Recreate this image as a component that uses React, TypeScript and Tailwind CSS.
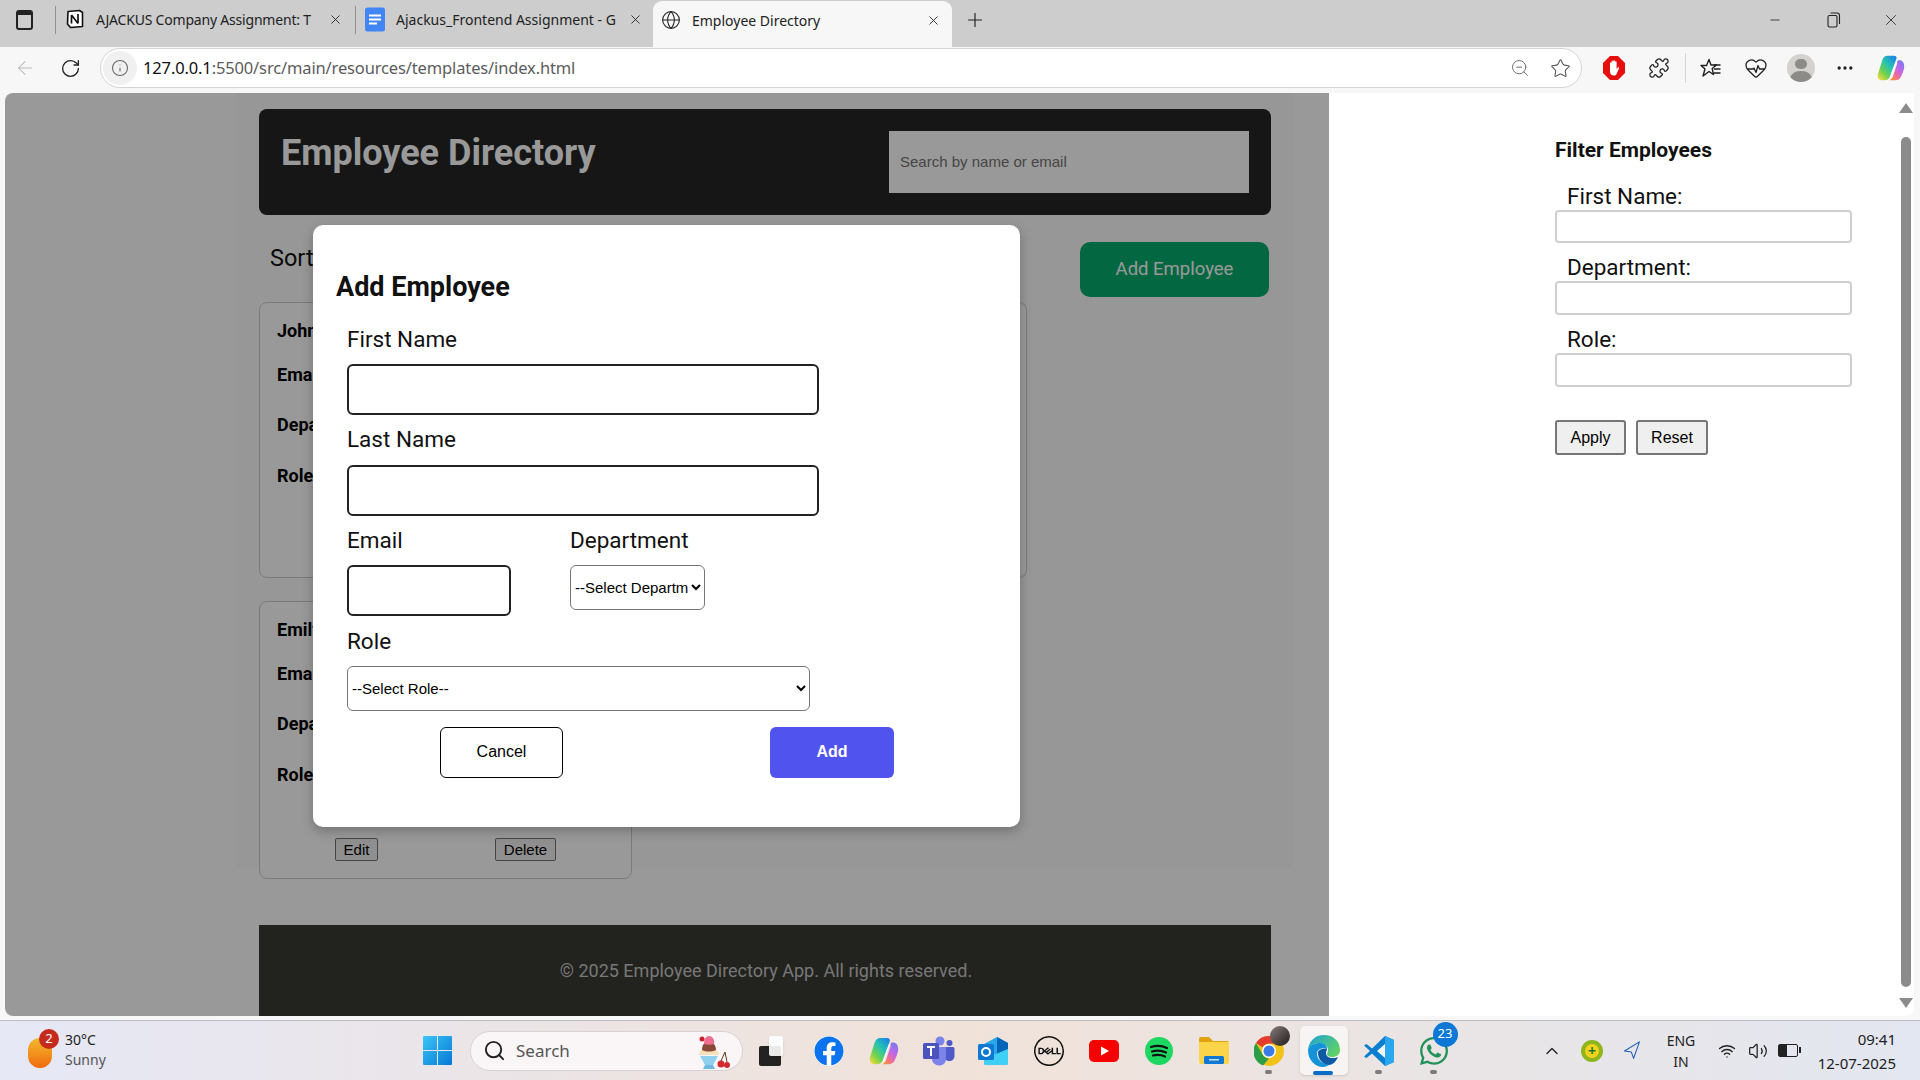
import React from "react";
import {
  ArrowLeft,
  Ellipsis,
  Globe,
  HeartPulse,
  Info,
  Minus,
  Navigation,
  Plus,
  Puzzle,
  RotateCw,
  Search,
  Star,
  Volume2,
  Wifi,
  X,
  ZoomOut,
  ChevronUp,
} from "lucide-react";
import { FaFacebook, FaWhatsapp } from "react-icons/fa";
import { SiDell } from "react-icons/si";

const ui = "font-['Noto_Sans',sans-serif]";
const roboto = "font-['Roboto',sans-serif]";
const arial = "font-['Liberation_Sans',Arial,sans-serif]";

function CopilotIcon({ size, id }: { size: number; id: string }) {
  return (
    <svg width={size} height={size} viewBox="0 0 32 32">
      <defs>
        <linearGradient id={`${id}a`} x1="0.9" y1="0" x2="0.1" y2="1">
          <stop offset="0" stopColor="#1b7fe8" />
          <stop offset="0.4" stopColor="#27c4b0" />
          <stop offset="0.7" stopColor="#6fd24f" />
          <stop offset="1" stopColor="#f6d93a" />
        </linearGradient>
        <linearGradient id={`${id}b`} x1="0.9" y1="0" x2="0.2" y2="1">
          <stop offset="0" stopColor="#6d7cf2" />
          <stop offset="0.45" stopColor="#c765e6" />
          <stop offset="0.75" stopColor="#f2708c" />
          <stop offset="1" stopColor="#f6903a" />
        </linearGradient>
      </defs>
      <path d="M12 2h7c3 0 4 2 3 4L15 25c-1 3-3 5-6 5H6c-4 0-6-3-5-7L6 7c1-3 3-5 6-5z" fill={`url(#${id}a)`} />
      <path d="M24 7h2c3 0 5 3 5 6v3c-1 4-3 10-5 12-1 1-3 2-5 2h-7c2-1 3-2 4-4l5-15c0-2 0-3 1-4z" fill={`url(#${id}b)`} />
      <path d="M21 9l1 0-6 18c-1 1-1 2-2 3h-1c1-1 2-2 2-4z" fill="#fff" opacity="0.9" />
    </svg>
  );
}

function NotionIcon() {
  return (
    <svg width="20" height="20" viewBox="0 0 20 20">
      <path d="M3 2.5 14.500 1.500 17.500 3.500V17.500L5.500 18.500 2.500 15z" fill="#fff" stroke="#111" strokeWidth="1.6" strokeLinejoin="round" />
      <path d="M6.500 6v8.500M6.500 6l6.500 8.500M13 5v9.500" fill="none" stroke="#111" strokeWidth="1.7" />
    </svg>
  );
}

function DocsIcon() {
  return (
    <svg width="21" height="25" viewBox="0 0 20 24">
      <rect x="0" y="0" width="20" height="24" rx="2.500" fill="#4285f4" />
      <path d="M4 8h12M4 12h12M4 16h8" stroke="#fff" strokeWidth="2" />
    </svg>
  );
}

function RestoreIcon() {
  return (
    <svg width="14" height="16" viewBox="0 0 14 16" fill="none" stroke="#222" strokeWidth="1.1">
      <rect x="1" y="3.500" width="9" height="11.500" rx="1.500" />
      <path d="M3.500 1h6.500c1.500 0 2.500 1 2.500 2.500V12" />
    </svg>
  );
}

function StopIcon() {
  return (
    <svg width="22" height="24" viewBox="0 0 22 24">
      <path d="M7 0h8l7 7v10l-7 7H7l-7-7V7z" fill="#e60f0f" />
      <path d="M7 11V7c0-1 1.600-1 1.600 0V5.500c0-1 1.700-1 1.700 0V5c0-1 1.700-1 1.700 0v1c0-1 1.600-1 1.600 0v7l1.200-1.500c.8-.8 1.700 0 1.200 1L13.500 18c-.5 1-1.200 1.500-2.500 1.500-2.500 0-4-1.500-4-4z" fill="#fff" />
    </svg>
  );
}

function FavoritesIcon() {
  return (
    <svg width="22" height="22" viewBox="0 0 22 22" fill="none" stroke="#222" strokeWidth="1.4" strokeLinejoin="round">
      <path d="M9 2.500 11 8h5.500l-4.300 3.500 1.300 6L9 14.500 3 19l2-7-4-3.500h5.500z" />
      <path d="M13.500 8h7M14 12h6.500M14 16h6.500" />
    </svg>
  );
}

function ProfileIcon() {
  return (
    <div className="flex h-[28px] w-[28px] flex-col items-center overflow-hidden rounded-full bg-[#d3d2cf]">
      <div className="mt-[5px] h-[12px] w-[12px] rounded-full bg-[#8c8b88]" />
      <div className="mt-[2px] h-[14px] w-[24px] rounded-t-full bg-[#8c8b88]" />
    </div>
  );
}

function WindowsIcon() {
  return (
    <svg width="29" height="29" viewBox="0 0 29 29">
      <defs>
        <linearGradient id="win" x1="0" y1="0" x2="1" y2="1">
          <stop offset="0" stopColor="#3cc5f6" />
          <stop offset="1" stopColor="#0578d6" />
        </linearGradient>
      </defs>
      <path d="M0 1a1 1 0 0 1 1-1h13v14H0zM15 0h13a1 1 0 0 1 1 1v13H15zM0 15h14v14H1a1 1 0 0 1-1-1zM15 15h14v13a1 1 0 0 1-1 1H15z" fill="url(#win)" />
    </svg>
  );
}

function SundaeIcon() {
  return (
    <svg width="36" height="38" viewBox="0 0 36 38">
      <path d="M6 23h18l-5 9h-8z" fill="#8ed0ee" />
      <path d="M11 32h8l2 4H9z" fill="#6fb9e0" />
      <path d="M5 22c0-4 4-6 6-6h8c3 0 6 3 6 6z" fill="#f6e0b8" />
      <path d="M8 17c0-6 3-8 7-8s7 3 7 8c-4 2-10 2-14 0z" fill="#8a4a3a" />
      <path d="M10 11c0-5 2-8 5-8s6 3 5 8c-3 1-7 1-10 0z" fill="#ee6d90" />
      <circle cx="8" cy="6" r="2.500" fill="#c8202c" />
      <circle cx="27" cy="31" r="3.500" fill="#d22a2f" />
      <circle cx="33" cy="32" r="3" fill="#d22a2f" />
      <path d="M27 28l4-9 2 10" fill="none" stroke="#5b3a1e" strokeWidth="1" />
    </svg>
  );
}

function TaskViewIcon() {
  return (
    <div className="relative h-[30px] w-[24px]">
      <div className="absolute bottom-0 left-0 h-[20px] w-[22px] rounded-[2px] bg-[#222]" />
      <div className="absolute right-0 top-0 h-[20px] w-[14px] rounded-[2px] bg-white/90 shadow-sm" />
    </div>
  );
}

function TeamsIcon() {
  return (
    <svg width="32" height="30" viewBox="0 0 32 30">
      <circle cx="17" cy="5" r="4.500" fill="#7b83eb" />
      <circle cx="26.500" cy="7" r="3" fill="#5059c9" />
      <path d="M21 11h9a1.500 1.500 0 0 1 1.500 1.500V20c0 3-2.500 5-5 5-3 0-5.500-2-5.500-5z" fill="#5059c9" />
      <path d="M9 11h14v12c0 4-3 6.500-7 6.500s-7-3-7-6.500z" fill="#7b83eb" />
      <rect x="0" y="7" width="16" height="16" rx="1.500" fill="#4b53bc" />
      <path d="M4 11h8M8 11v9" stroke="#fff" strokeWidth="2" />
    </svg>
  );
}

function OutlookIcon() {
  return (
    <svg width="31" height="28" viewBox="0 0 31 28">
      <path d="M6 7 19 0l11 6v20a2 2 0 0 1-2 2H8a2 2 0 0 1-2-2z" fill="#28a8ea" />
      <path d="M30 6v6L19 17V0z" fill="#0364b8" />
      <path d="M6 17l12 0 12-5v14a2 2 0 0 1-2 2H8a2 2 0 0 1-2-2z" fill="#40d0f5" />
      <rect x="0" y="7" width="16" height="16" rx="1.500" fill="#0f78d4" />
      <circle cx="8" cy="15" r="4" fill="none" stroke="#fff" strokeWidth="2" />
    </svg>
  );
}

function YoutubeIcon() {
  return (
    <svg width="30" height="22" viewBox="0 0 30 22">
      <rect width="30" height="22" rx="5" fill="#f70000" />
      <path d="M12 6.500 20 11l-8 4.500z" fill="#fff" />
    </svg>
  );
}

function SpotifyIcon() {
  return (
    <svg width="28" height="28" viewBox="0 0 28 28">
      <circle cx="14" cy="14" r="14" fill="#1ed760" />
      <path d="M6 10c6-2 11-1.500 16 1M7 14.500c5-1.500 10-1 14 1M8 18.500c4-1 8-.8 12 1" fill="none" stroke="#111" strokeWidth="2.200" strokeLinecap="round" />
    </svg>
  );
}

function FolderIcon() {
  return (
    <svg width="30" height="27" viewBox="0 0 30 27">
      <path d="M0 2a2 2 0 0 1 2-2h8l4 4h14a2 2 0 0 1 2 2v3H0z" fill="#e0a20f" />
      <path d="M0 5h30v20a2 2 0 0 1-2 2H2a2 2 0 0 1-2-2z" fill="#fbd449" />
      <rect x="5" y="19" width="20" height="8" rx="1.500" fill="#0f78d4" />
      <rect x="10" y="22" width="10" height="1.500" fill="#bfe0f5" />
    </svg>
  );
}

function ChromeIcon() {
  return (
    <svg width="30" height="30" viewBox="0 0 30 30">
      <circle cx="15" cy="15" r="15" fill="#f2c21a" />
      <path d="M15 0a15 15 0 0 1 13 7.500H15a7.500 7.500 0 0 0-6.500 3.700L2 7A15 15 0 0 1 15 0z" fill="#e33b2e" />
      <path d="M2 7l6.500 11.300A7.500 7.500 0 0 0 15 22.500L9 29.500A15 15 0 0 1 2 7z" fill="#2b9f48" />
      <circle cx="15" cy="15" r="7" fill="#fff" />
      <circle cx="15" cy="15" r="5.500" fill="#3a7bea" />
    </svg>
  );
}

function EdgeIcon() {
  return (
    <svg width="32" height="32" viewBox="0 0 32 32">
      <defs>
        <linearGradient id="edgeA" x1="0" y1="0" x2="1" y2="0.6">
          <stop offset="0" stopColor="#1aa3d8" />
          <stop offset="1" stopColor="#5fd068" />
        </linearGradient>
      </defs>
      <path d="M16 0c9 0 16 6 16 15 0 5-4 7-8 7-3 0-5-1-5-3 0-1 1-2 1-4 0-4-4-7-8-7C6 8 2 11 0 15 1 6 7 0 16 0z" fill="url(#edgeA)" />
      <path d="M0 15c2-5 7-7 12-7 4 0 7 2 7 6-5-2-10 0-10 5 0 5 5 10 12 11-2 1-4 2-6 2C7 32 0 25 0 15z" fill="#1593d8" />
      <path d="M10 18c0-3 4-5 9-4 0 1-1 2-1 4 0 3 3 5 6 5 2 0 4 0 6-1-2 5-6 8-9 8-6 0-11-6-11-12z" fill="#0c59a4" />
    </svg>
  );
}

function VsCodeIcon() {
  return (
    <svg width="30" height="30" viewBox="0 0 30 30">
      <path d="M21 0l9 4v22l-9 4L8 17.500l-5.500 4.500L0 20.500 6 15 0 9.500 2.500 8 8 12.500z" fill="#0a7fd0" />
      <path d="M21 0l9 4v22l-9 4z" fill="#2aa7ee" />
      <path d="M21 8v14l-8-7z" fill="#fff" opacity="0.95" />
    </svg>
  );
}

function TaskbarSlot({
  children,
  active,
  dot,
}: {
  children: React.ReactNode;
  active?: boolean;
  dot?: boolean;
}) {
  return (
    <div className="relative flex h-full w-[55px] items-center justify-center">
      {active && (
        <div className="absolute left-[4px] top-[5px] h-[49px] w-[48px] rounded-[5px] bg-white/60 shadow-sm" />
      )}
      <div className="relative flex items-center justify-center">{children}</div>
      {dot && (
        <div className="absolute bottom-[6px] left-[24px] h-[4px] w-[7px] rounded-full bg-[#7b7b7b]" />
      )}
      {active && (
        <div className="absolute bottom-[5px] left-[17px] h-[4px] w-[20px] rounded-full bg-[#0a6cc9]" />
      )}
    </div>
  );
}

function Tab({
  icon,
  title,
  active,
  titleClass,
}: {
  icon: React.ReactNode;
  title: string;
  active?: boolean;
  titleClass?: string;
}) {
  return (
    <div
      className={`flex h-full items-center pb-[9px] ${
        active ? "mt-[1px] w-[299px] rounded-t-[9px] bg-[#f7f7f7] pl-[8px] pr-[11px]" : "w-[298px] pl-[9px] pr-[11px]"
      }`}
    >
      <div className="flex w-[20px] shrink-0 justify-center">{icon}</div>
      <div className={`ml-[11px] flex-1 overflow-hidden whitespace-nowrap text-[14px] text-[#222] ${ui} ${titleClass ?? ""}`}>
        {title}
      </div>
      <X size={15} strokeWidth={1.4} className="ml-[8px] shrink-0 text-[#222]" />
    </div>
  );
}

function BrowserChrome() {
  return (
    <div className="shrink-0">
      <div className="flex h-[47px] items-center bg-[#cdcdcd]">
        <div className="flex w-[55px] justify-center pb-[7px] pr-[6px]">
          <div className="h-[20px] w-[17px] rounded-[3px] border-2 border-[#222] border-t-[5px]" />
        </div>
        <div className="mb-[7px] h-[28px] w-px bg-[#8f8f8f]" />
        <div className="h-[47px] w-[299px]">
          <Tab icon={<NotionIcon />} title="AJACKUS Company Assignment: T" titleClass="tracking-[-0.2px]" />
        </div>
        <div className="mb-[7px] h-[28px] w-px bg-[#8f8f8f]" />
        <div className="h-[47px] w-[297px]">
          <Tab icon={<DocsIcon />} title="Ajackus_Frontend Assignment - G" />
        </div>
        <div className="h-[47px] w-[299px]">
          <Tab active icon={<Globe size={20} strokeWidth={1.3} className="text-[#222]" />} title="Employee Directory" />
        </div>
        <div className="flex w-[46px] justify-center pb-[7px]">
          <Plus size={22} strokeWidth={1.3} className="text-[#222]" />
        </div>
        <div className="flex flex-1 items-center justify-end pb-[7px] pr-[20px]">
          <Minus size={14} strokeWidth={1.4} className="mr-[45px] text-[#222]" />
          <RestoreIcon />
          <X size={18} strokeWidth={1.1} className="ml-[41px] text-[#222]" />
        </div>
      </div>
      <div className="flex h-[46px] items-start bg-[#f7f7f7] pt-[1px]">
        <div className="flex h-[40px] w-[50px] items-center justify-center">
          <ArrowLeft size={22} strokeWidth={1.1} className="text-[#b9b9b9]" />
        </div>
        <div className="flex h-[40px] w-[40px] items-center justify-center">
          <RotateCw size={21} strokeWidth={1.5} className="text-[#222]" />
        </div>
        <div className="ml-[10px] flex h-[40px] w-[1482px] items-center rounded-full border border-[#d4d4d4] bg-white">
          <div className="ml-[2px] flex h-[34px] w-[34px] items-center justify-center rounded-full bg-[#f0f0f0]">
            <Info size={18} strokeWidth={1.4} className="text-[#666]" />
          </div>
          <div className={`ml-[6px] text-[16.500px] tracking-[-0.14px] ${ui}`}>
            <span className="text-[#111]">127.0.0.1</span>
            <span className="text-[#5c5c5c]">:5500/src/main/resources/templates/index.html</span>
          </div>
          <div className="ml-auto flex items-center pr-[10px]">
            <ZoomOut size={20} strokeWidth={1.2} className="text-[#707070]" />
            <Star size={21} strokeWidth={1.2} className="ml-[20px] text-[#555]" />
          </div>
        </div>
        <div className="ml-[21px] flex h-[40px] w-[22px] items-center justify-center">
          <StopIcon />
        </div>
        <div className="ml-[22px] flex h-[40px] w-[24px] items-center justify-center">
          <Puzzle size={22} strokeWidth={1.4} className="text-[#222]" />
        </div>
        <div className="ml-[14px] mt-[5px] h-[30px] w-px bg-[#d5d5d5]" />
        <div className="ml-[14px] flex h-[40px] items-center">
          <FavoritesIcon />
        </div>
        <div className="ml-[22px] flex h-[40px] items-center">
          <HeartPulse size={24} strokeWidth={1.3} className="text-[#222]" />
        </div>
        <div className="ml-[19px] flex h-[40px] items-center">
          <ProfileIcon />
        </div>
        <div className="ml-[20px] flex h-[40px] items-center">
          <Ellipsis size={20} strokeWidth={2} className="text-[#222]" />
        </div>
        <div className="ml-[22px] flex h-[40px] items-center">
          <CopilotIcon size={28} id="cpa" />
        </div>
      </div>
    </div>
  );
}

function EmployeeCard({
  name,
  className,
  children,
}: {
  name: string;
  className: string;
  children?: React.ReactNode;
}) {
  return (
    <div className={`rounded-lg border border-[#ccc] bg-white pl-[17px] text-[18px] font-bold ${roboto} ${className}`}>
      <p className="mt-[15px] h-[26px] leading-[26px]">{name}</p>
      <p className="mt-[18px] h-[26px] leading-[26px]">Email:</p>
      <p className="mt-[24px] h-[26px] leading-[26px]">Department:</p>
      <p className="mt-[25px] h-[26px] leading-[26px]">Role:</p>
      {children}
    </div>
  );
}

function ModalField({ label }: { label: string }) {
  return (
    <label className={`block h-[28px] text-[22.500px] leading-[29px] text-[#111] ${roboto}`}>{label}</label>
  );
}

function AddEmployeeModal() {
  const inputClass = "block h-[51px] rounded-[6px] border-2 border-[#222] bg-white";
  const selectClass = `block rounded-[6px] border border-[#767676] bg-white text-[15px] text-black ${arial}`;
  return (
    <div className="absolute left-[308px] top-[132px] h-[602px] w-[707px] rounded-[10px] bg-white pl-[34px] pt-[44px] shadow-[0_4px_12px_rgba(0,0,0,0.25)]">
      <h2 className={`-ml-[11px] h-[34px] text-[27px] font-bold leading-[36px] text-[#111] ${roboto}`}>Add Employee</h2>
      <div className="mt-[22px]">
        <ModalField label="First Name" />
        <input className={`mt-[11px] w-[472px] ${inputClass}`} />
      </div>
      <div className="mt-[10px]">
        <ModalField label="Last Name" />
        <input className={`mt-[12px] w-[472px] ${inputClass}`} />
      </div>
      <div className="mt-[10px] flex items-start">
        <div className="w-[164px]">
          <ModalField label="Email" />
          <input className={`mt-[11px] w-[164px] ${inputClass}`} />
        </div>
        <div className="ml-[59px]">
          <ModalField label="Department" />
          <select className={`mt-[11px] h-[45px] w-[135px] ${selectClass}`}>
            <option>--Select Department--</option>
          </select>
        </div>
      </div>
      <div className="mt-[11px]">
        <ModalField label="Role" />
        <select className={`mt-[11px] h-[45px] w-[463px] ${selectClass}`}>
          <option>--Select Role--</option>
        </select>
      </div>
      <div className={`ml-[93px] mt-[16px] flex text-[16px] ${arial}`}>
        <button className="h-[51px] w-[123px] rounded-[6px] border border-black bg-white pb-[2px] text-black">Cancel</button>
        <button className="ml-[207px] h-[51px] w-[124px] rounded-[6px] bg-[#5053ee] pb-[2px] font-bold text-white">Add</button>
      </div>
    </div>
  );
}

function MainPanel() {
  return (
    <div className="relative w-[1324px] overflow-hidden rounded-l-lg bg-white">
      <div className="ml-[231px] h-[775px] w-[1057px] bg-[#fcfcfc] px-[23px] pt-[16px]">
        <header className="flex h-[106px] w-[1012px] items-start justify-between rounded-lg bg-[#252525] pl-[22px] pr-[22px] pt-[22px]">
          <h1 className={`text-[36px] font-bold leading-[45px] text-white ${roboto}`}>Employee Directory</h1>
          <input
            placeholder="Search by name or email"
            className={`h-[62px] w-[360px] bg-white pb-[2px] pl-[11px] text-[15px] placeholder:text-[#757575] ${arial}`}
          />
        </header>
        <div className="flex h-[87px] w-[1012px] items-start justify-between">
          <div className={`ml-[11px] mt-[29px] text-[23.500px] leading-[28px] text-[#111] ${roboto}`}>Sort by:</div>
          <button className={`mr-[2px] mt-[27px] h-[55px] w-[189px] rounded-[10px] bg-[#05ad6e] text-[18.500px] text-white ${roboto}`}>
            Add Employee
          </button>
        </div>
        <EmployeeCard name="John Doe" className="h-[276px] w-[768px]" />
        <EmployeeCard name="Emily Smith" className="relative mt-[23px] h-[278px] w-[373px]">
          <div className={`absolute left-[75px] top-[236px] flex text-[16px] font-normal ${arial}`}>
            <button className="h-[23px] w-[43px] rounded-[2px] border border-[#767676] bg-[#efefef] text-[15px] leading-[20px]">Edit</button>
            <button className="ml-[117px] h-[23px] w-[61px] rounded-[2px] border border-[#767676] bg-[#efefef] text-[15px] leading-[20px]">Delete</button>
          </div>
        </EmployeeCard>
      </div>
      <footer className={`ml-[254px] mt-[57px] flex h-[91px] w-[1012px] items-center justify-center bg-[#393935] pl-[2px] text-[18px] text-[#c6c6c6] ${roboto}`}>
        © 2025 Employee Directory App. All rights reserved.
      </footer>
      <div className="absolute inset-0 bg-black/40" />
      <AddEmployeeModal />
    </div>
  );
}

function FilterLabel({ children, className }: { children: React.ReactNode; className?: string }) {
  return (
    <label className={`block h-[28px] pl-[12px] text-[22.500px] leading-[28px] text-[#111] ${roboto} ${className ?? ""}`}>
      {children}
    </label>
  );
}

function FilterPanel() {
  const inputClass = "block w-[297px] rounded-[4px] border-2 border-[#cfcfcf] bg-white";
  const buttonClass = `h-[35px] rounded-[3px] border-2 border-[#767676] bg-[#efefef] text-[16px] text-black ${arial}`;
  return (
    <div className="flex flex-1 rounded-br-lg bg-white">
      <aside className="flex-1 pl-[226px] pt-[43px]">
        <h3 className={`h-[28px] text-[21px] font-bold leading-[28px] text-[#111] ${roboto}`}>Filter Employees</h3>
        <div className="mt-[18px]">
          <FilterLabel>First Name:</FilterLabel>
          <input className={`h-[33px] ${inputClass}`} />
        </div>
        <div className="mt-[10px]">
          <FilterLabel>Department:</FilterLabel>
          <input className={`h-[34px] ${inputClass}`} />
        </div>
        <div className="mt-[9px]">
          <FilterLabel className="pt-[1px]">Role:</FilterLabel>
          <input className={`mt-[1px] h-[34px] ${inputClass}`} />
        </div>
        <div className="mt-[33px] flex">
          <button className={`w-[71px] ${buttonClass}`}>Apply</button>
          <button className={`ml-[10px] w-[72px] ${buttonClass}`}>Reset</button>
        </div>
      </aside>
      <div className="flex w-[17px] flex-col items-center">
        <div className="mt-[10px] h-0 w-0 border-x-[7px] border-b-[10px] border-x-transparent border-b-[#8b8b8b]" />
        <div className="mt-[24px] h-[850px] w-[10px] rounded-full bg-[#8b8b8b]" />
        <div className="mt-[11px] h-0 w-0 border-x-[7px] border-t-[10px] border-x-transparent border-t-[#8b8b8b]" />
      </div>
    </div>
  );
}

function Taskbar() {
  return (
    <div className={`flex h-[60px] shrink-0 items-center border-t border-[#bdbdc4] bg-gradient-to-r from-[#e6e8f6] via-[#f0e2d9] to-[#e3e7f1] text-[#222] ${ui}`}>
      <div className="flex w-[423px] items-center pl-[28px]">
        <div className="relative mt-[4px] h-[30px] w-[24px]">
          <div className="h-full w-full rounded-full bg-gradient-to-b from-[#f2b92d] to-[#ee6a0e]" />
          <div className="absolute -right-[7px] -top-[9px] flex h-[20px] w-[20px] items-center justify-center rounded-full bg-[#c42b1c] text-[13px] text-white">
            2
          </div>
        </div>
        <div className="-mt-[2px] ml-[13px] text-[14px] leading-[20px]">
          <div>30°C</div>
          <div className="text-[#555]">Sunny</div>
        </div>
      </div>
      <WindowsIcon />
      <div className="relative ml-[18px] flex h-[40px] w-[273px] items-center rounded-full border border-[#d8d2d6] bg-[#faf6f7] pl-[12px]">
        <Search size={23} strokeWidth={2} className="text-[#222]" />
        <span className="ml-[10px] text-[17px] text-[#555]">Search</span>
        <div className="absolute right-[12px] top-[1px]">
          <SundaeIcon />
        </div>
      </div>
      <div className="ml-[16px]">
        <TaskViewIcon />
      </div>
      <div className="ml-[18px] flex h-full">
        <TaskbarSlot>
          <FaFacebook size={30} color="#0a74ee" className="rounded-full bg-white" />
        </TaskbarSlot>
        <TaskbarSlot>
          <CopilotIcon size={30} id="cpb" />
        </TaskbarSlot>
        <TaskbarSlot>
          <TeamsIcon />
        </TaskbarSlot>
        <TaskbarSlot>
          <OutlookIcon />
        </TaskbarSlot>
        <TaskbarSlot>
          <SiDell size={30} color="#111" />
        </TaskbarSlot>
        <TaskbarSlot>
          <YoutubeIcon />
        </TaskbarSlot>
        <TaskbarSlot>
          <SpotifyIcon />
        </TaskbarSlot>
        <TaskbarSlot>
          <FolderIcon />
        </TaskbarSlot>
        <TaskbarSlot dot>
          <ChromeIcon />
          <div className="absolute -right-[6px] -top-[10px] h-[20px] w-[20px] rounded-full bg-gradient-to-br from-[#8a7f7c] to-[#221d1d]" />
        </TaskbarSlot>
        <TaskbarSlot active>
          <EdgeIcon />
        </TaskbarSlot>
        <TaskbarSlot dot>
          <VsCodeIcon />
        </TaskbarSlot>
        <TaskbarSlot dot>
          <FaWhatsapp size={32} color="#23925a" />
          <div className="absolute -right-[8px] -top-[13px] flex h-[25px] w-[25px] items-center justify-center rounded-full bg-[#0a78d4] text-[13px] text-white">
            23
          </div>
        </TaskbarSlot>
      </div>
      <div className="ml-[71px] flex w-[40px] justify-center">
        <ChevronUp size={20} strokeWidth={1.6} />
      </div>
      <div className="flex w-[40px] justify-center">
        <div className="flex h-[22px] w-[22px] items-center justify-center rounded-full bg-[#8db51c]">
          <div className="flex h-[14px] w-[14px] items-center justify-center rounded-full bg-[#f3d21c] text-[14px] font-bold leading-none text-[#1f7a2e]">
            +
          </div>
        </div>
      </div>
      <div className="flex w-[40px] justify-center">
        <Navigation size={20} strokeWidth={1.3} className="-rotate-6 text-[#1f5fb4]" />
      </div>
      <div className="w-[58px] text-center text-[14px] leading-[21px]">
        <div>ENG</div>
        <div>IN</div>
      </div>
      <div className="ml-[2px] flex w-[30px] justify-center">
        <Wifi size={18} strokeWidth={1.8} />
      </div>
      <div className="flex w-[31px] justify-center">
        <Volume2 size={20} strokeWidth={1.5} />
      </div>
      <div className="flex w-[29px] justify-center">
        <div className="relative h-[13px] w-[20px] rounded-[2px] border-[1.500px] border-[#222]">
          <div className="h-full w-[8px] bg-[#222]" />
          <div className="absolute -right-[4px] top-[2px] h-[6px] w-[2px] bg-[#222]" />
        </div>
      </div>
      <div className="flex-1 pr-[24px] text-right text-[15px] leading-[24px]">
        <div>09:41</div>
        <div>12-07-2025</div>
      </div>
    </div>
  );
}

export default function App() {
  return (
    <div className="flex h-[1080px] w-[1920px] flex-col overflow-hidden bg-[#f7f7f7]">
      <BrowserChrome />
      <div className="flex h-[923px] shrink-0 pl-[5px] pr-[6px]">
        <MainPanel />
        <FilterPanel />
      </div>
      <div className="h-[4px] shrink-0" />
      <Taskbar />
    </div>
  );
}
